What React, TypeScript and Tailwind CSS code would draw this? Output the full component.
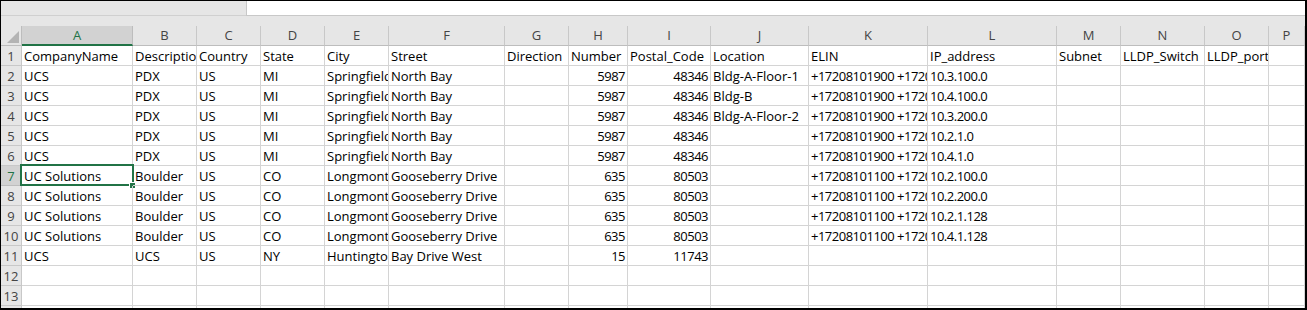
import React from 'react';

const cols = ['A', 'B', 'C', 'D', 'E', 'F', 'G', 'H', 'I', 'J', 'K', 'L', 'M', 'N', 'O', 'P'];

// columns holding numbers are right aligned; digits are packed a bit tighter
const rightCols = [7, 8];
const tightCols = [7, 8, 10, 11];

const header = [
  'CompanyName', 'Description', 'Country', 'State', 'City', 'Street', 'Direction', 'Number',
  'Postal_Code', 'Location', 'ELIN', 'IP_address', 'Subnet', 'LLDP_Switch', 'LLDP_port', '',
];

const pdx = (loc: string, ip: string) => [
  'UCS', 'PDX', 'US', 'MI', 'Springfield', 'North Bay', '', '5987', '48346', loc,
  '+17208101900 +17208101900', ip, '', '', '', '',
];

const boulder = (ip: string) => [
  'UC Solutions', 'Boulder', 'US', 'CO', 'Longmont', 'Gooseberry Drive', '', '635', '80503', '',
  '+17208101100 +17208101100', ip, '', '', '', '',
];

const rows: string[][] = [
  header,
  pdx('Bldg-A-Floor-1', '10.3.100.0'),
  pdx('Bldg-B', '10.4.100.0'),
  pdx('Bldg-A-Floor-2', '10.3.200.0'),
  pdx('', '10.2.1.0'),
  pdx('', '10.4.1.0'),
  boulder('10.2.100.0'),
  boulder('10.2.200.0'),
  boulder('10.2.1.128'),
  boulder('10.4.1.128'),
  ['UCS', 'UCS', 'US', 'NY', 'Huntington', 'Bay Drive West', '', '15', '11743', '', '', '', '', '', '', ''],
  Array(16).fill(''),
  Array(16).fill(''),
  Array(16).fill(''),
];

const gridCols =
  'grid grid-cols-[21px_111px_64px_64px_64px_64px_116px_64px_59px_83px_98px_119px_129px_64px_84px_64px_1fr]';

export default function App() {
  return (
    <div
      className="w-[1307px] h-[310px] overflow-hidden border-black border-t border-l border-r-2 border-b-2 bg-[#e6e6e6] text-[13px] text-black"
      style={{ fontFamily: '"Open Sans", "Noto Sans", sans-serif' }}
    >
      {/* formula strip */}
      <div className="flex h-[15px]">
        <div className="w-[245px] border-b border-[#d0d0d0]" />
        <div className="flex-1 bg-white border-l border-b border-[#c8c8c8]" />
      </div>
      <div className="h-[10px]" />

      {/* column letters */}
      <div className={gridCols}>
        <div className="h-5 border-r border-b border-[#bdbdbd] flex items-end justify-end pr-[2px] pb-[2px]">
          <svg width="12" height="12" viewBox="0 0 12 12">
            <polygon points="12,0 12,12 0,12" fill="#b4b4b4" />
          </svg>
        </div>
        {cols.map((c, i) => (
          <div
            key={c}
            className={
              i === 0
                ? 'h-5 leading-[19px] text-center bg-[#d2d2d2] text-[#217346] border-r border-[#bdbdbd] border-b-2 border-b-[#217346]'
                : 'h-5 leading-[19px] text-center text-[#444] border-r border-[#c8c8c8] border-b border-b-[#bdbdbd]'
            }
          >
            {c}
          </div>
        ))}
      </div>

      {/* data rows */}
      <div className="bg-white">
        {rows.map((row, r) => (
          <div key={r} className={gridCols}>
            <div
              className={
                r === 6
                  ? 'h-5 leading-[20px] text-center bg-[#d2d2d2] text-[#217346] border-r border-b border-[#bdbdbd]'
                  : 'h-5 leading-[20px] text-center bg-[#e6e6e6] text-[#444] border-r border-b border-[#c8c8c8]'
              }
            >
              {r + 1}
            </div>
            {row.map((v, c) => (
              <div
                key={c}
                className={[
                  'relative h-5 leading-[20px] whitespace-nowrap border-r border-b border-[#d4d4d4]',
                  rightCols.includes(c) && r > 0 ? 'text-right pr-[2px]' : 'pl-[2px]',
                  tightCols.includes(c) && r > 0 ? 'tracking-[-0.5px]' : '',
                  r === 6 && c === 0 ? '' : 'overflow-hidden',
                ].join(' ')}
              >
                {v}
                {r === 6 && c === 0 && (
                  <>
                    <div className="absolute -left-[2px] -top-[2px] w-[114px] h-[22px] border-2 border-[#217346]" />
                    <div className="absolute left-[107px] top-[16px] w-[7px] h-[7px] bg-[#217346] border border-white" />
                  </>
                )}
              </div>
            ))}
          </div>
        ))}
      </div>
    </div>
  );
}
